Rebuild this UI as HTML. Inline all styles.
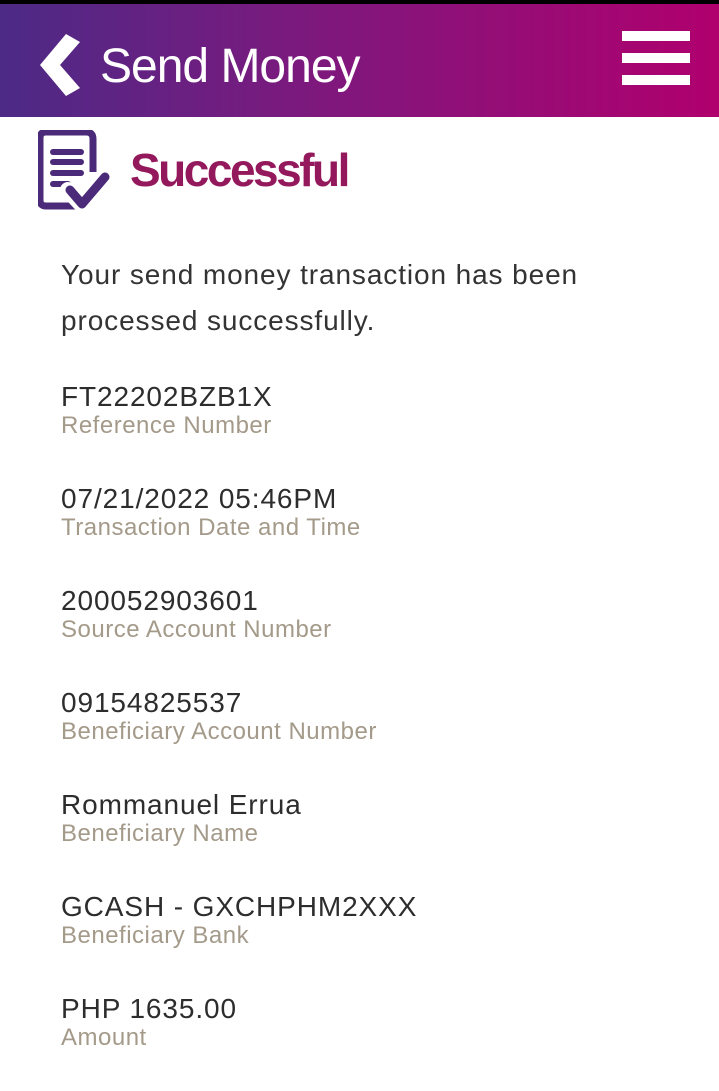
<!DOCTYPE html>
<html><head><meta charset="utf-8"><style>
html,body{margin:0;padding:0;width:719px;height:1091px;background:#fff;overflow:hidden;font-family:"Liberation Sans",sans-serif;}
.top{height:4px;background:#000;}
.hdr{height:113px;background:linear-gradient(90deg,#4c2a86 0%,#7a1a7e 40%,#b0006e 100%);position:relative;}
.hdr .t{position:absolute;left:100px;top:35px;color:#fff;font-size:48px;letter-spacing:-1px;}
.menu{position:absolute;left:622px;width:68px;height:10px;background:#fff;}
.ttl{position:absolute;left:130px;top:143px;font-size:46px;font-weight:bold;color:#94195c;letter-spacing:-2.5px;}
.p{position:absolute;left:61px;font-size:28px;color:#333;line-height:46px;letter-spacing:0.9px;}
.v{position:absolute;left:61px;font-size:28px;color:#2d2d2d;letter-spacing:0.9px;}
.l{position:absolute;left:61px;font-size:24px;color:#a49a8a;letter-spacing:0.5px;}
</style></head><body>
<div class="top"></div>
<div class="hdr">
<svg style="position:absolute;left:36px;top:26px" width="50" height="70" viewBox="0 0 50 70"><path d="M30 4 L44 12 L24 35 L44 58 L30 66 L4 35 Z" fill="#fff"/></svg>
<div class="t">Send Money</div>
<div class="menu" style="top:27px"></div>
<div class="menu" style="top:49px"></div>
<div class="menu" style="top:71px"></div>
</div>
<svg style="position:absolute;left:38px;top:130px" width="76" height="84" viewBox="0 0 76 84">
<path d="M6 2 H48 Q55 2 55 9 V42 M40 76 H8 Q2 76 2 70 V8 Q2 2 8 2" fill="none" stroke="#4b2a7a" stroke-width="7"/>
<g stroke="#4b2a7a" stroke-width="6" stroke-linecap="round"><line x1="15" y1="22" x2="43" y2="22"/><line x1="15" y1="32" x2="43" y2="32"/><line x1="15" y1="43" x2="43" y2="43"/><line x1="15" y1="54" x2="30" y2="54"/></g>
<path d="M30 60 L43 74 L68 46" fill="none" stroke="#fff" stroke-width="16" stroke-linecap="round" stroke-linejoin="round"/>
<path d="M32 60 L44 74 L67 47" fill="none" stroke="#4b2a7a" stroke-width="9" stroke-linecap="round" stroke-linejoin="round"/>
</svg>
<div class="ttl">Successful</div>
<div class="p" style="top:252px">Your send money transaction has been<br>processed successfully.</div>
<div class="v" style="top:381px">FT22202BZB1X</div><div class="l" style="top:412px">Reference Number</div>
<div class="v" style="top:483px">07/21/2022 05:46PM</div><div class="l" style="top:514px">Transaction Date and Time</div>
<div class="v" style="top:585px">200052903601</div><div class="l" style="top:616px">Source Account Number</div>
<div class="v" style="top:687px">09154825537</div><div class="l" style="top:718px">Beneficiary Account Number</div>
<div class="v" style="top:789px">Rommanuel Errua</div><div class="l" style="top:820px">Beneficiary Name</div>
<div class="v" style="top:891px">GCASH - GXCHPHM2XXX</div><div class="l" style="top:922px">Beneficiary Bank</div>
<div class="v" style="top:993px">PHP 1635.00</div><div class="l" style="top:1024px">Amount</div>
</body></html>
